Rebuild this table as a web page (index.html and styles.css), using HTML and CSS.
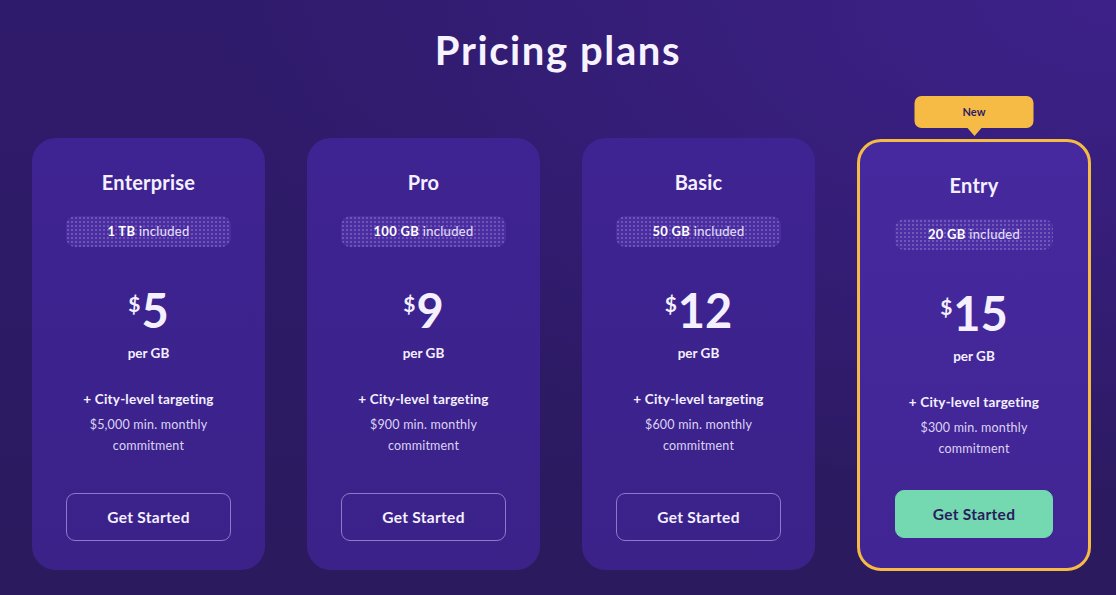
FILE: index.html
```html
<!DOCTYPE html>
<html lang="en">
<head>
<meta charset="utf-8">
<title>Pricing plans</title>
<link rel="stylesheet" href="styles.css">
</head>
<body>
<main class="page">
  <h1 class="title">Pricing plans</h1>
  <div class="plans">
    <section class="card">
      <h2 class="plan-name">Enterprise</h2>
      <div class="badge"><b>1 TB</b> included</div>
      <div class="price"><span class="cur">$</span><span class="amount">5</span></div>
      <div class="unit">per GB</div>
      <div class="feature">+ City-level targeting</div>
      <p class="desc">$5,000 min. monthly<br>commitment</p>
      <button class="btn">Get Started</button>
    </section>
    <section class="card">
      <h2 class="plan-name">Pro</h2>
      <div class="badge"><b>100 GB</b> included</div>
      <div class="price"><span class="cur">$</span><span class="amount">9</span></div>
      <div class="unit">per GB</div>
      <div class="feature">+ City-level targeting</div>
      <p class="desc">$900 min. monthly<br>commitment</p>
      <button class="btn">Get Started</button>
    </section>
    <section class="card">
      <h2 class="plan-name">Basic</h2>
      <div class="badge"><b>50 GB</b> included</div>
      <div class="price"><span class="cur">$</span><span class="amount">12</span></div>
      <div class="unit">per GB</div>
      <div class="feature">+ City-level targeting</div>
      <p class="desc">$600 min. monthly<br>commitment</p>
      <button class="btn">Get Started</button>
    </section>
    <section class="card card-featured">
      <div class="tag">New</div>
      <h2 class="plan-name">Entry</h2>
      <div class="badge"><b>20 GB</b> included</div>
      <div class="price"><span class="cur">$</span><span class="amount">15</span></div>
      <div class="unit">per GB</div>
      <div class="feature">+ City-level targeting</div>
      <p class="desc">$300 min. monthly<br>commitment</p>
      <button class="btn btn-primary">Get Started</button>
    </section>
  </div>
</main>
</body>
</html>
```

FILE: styles.css
```css
* { box-sizing: border-box; }
html, body { margin: 0; height: 100%; }
body {
  font-family: "Lato", "Liberation Sans", sans-serif;
  color: #f4f0ff;
  background:
    radial-gradient(ellipse 900px 500px at 100% 0%, #3d2189 0%, rgba(61,33,137,0) 100%),
    linear-gradient(180deg, #2f1b6b 0%, #2d1a65 60%, #2b1a5d 100%);
  overflow: hidden;
}
.page {
  width: 1116px;
  height: 595px;
  display: flex;
  flex-direction: column;
  align-items: center;
}
.title {
  margin: 26px 0 0;
  font-size: 40px;
  line-height: 48px;
  font-weight: 700;
  letter-spacing: 1.6px;
  color: #f6f2ff;
}
.plans {
  margin-top: 64px;
  align-self: flex-start;
  padding-left: 32px;
  display: flex;
  gap: 42px;
  align-items: flex-start;
}
.card {
  position: relative;
  width: 233px;
  height: 432px;
  border-radius: 24px;
  background: linear-gradient(180deg, #3e2392 0%, #3b2289 100%);
  padding: 32px 34px 29px;
  display: flex;
  flex-direction: column;
  align-items: center;
  text-align: center;
}
.card-featured {
  width: 234px;
  height: 432px;
  margin-top: 1px;
  border: 3px solid #f6bb44;
  background: linear-gradient(180deg, #46299e 0%, #412594 100%);
  padding: 31px 35px 30px;
}
.plan-name {
  margin: 0;
  font-size: 20px;
  line-height: 24px;
  font-weight: 700;
  letter-spacing: 0.2px;
}
.badge {
  margin-top: 22px;
  width: 100%;
  height: 31px;
  border-radius: 9px;
  background-color: #4a2da0;
  background-image: radial-gradient(circle, rgba(255,255,255,0.2) 0.7px, rgba(255,255,255,0) 1.1px);
  background-size: 4px 4px;
  font-size: 13px;
  line-height: 31px;
  font-weight: 400;
  letter-spacing: 0.3px;
  color: #e9e3ff;
}
.badge b { font-weight: 700; color: #fff; }
.card-featured .badge { background-color: #4c2fa4; }
.price {
  margin-top: 40px;
  display: flex;
  align-items: flex-start;
  justify-content: center;
  height: 46px;
}
.cur {
  font-size: 21px;
  line-height: 20px;
  font-weight: 700;
  margin-top: 7px;
  margin-right: 1px;
}
.amount {
  font-size: 47px;
  line-height: 46px;
  font-weight: 700;
}
.unit {
  margin-top: 12px;
  font-size: 13.5px;
  line-height: 16px;
  font-weight: 700;
}
.feature {
  margin-top: 30px;
  font-size: 13.5px;
  line-height: 16px;
  font-weight: 700;
  letter-spacing: 0.2px;
}
.desc {
  margin: 7px 0 0;
  font-size: 12.5px;
  line-height: 21px;
  letter-spacing: 0.2px;
  color: #ddd4f4;
}
.btn {
  margin-top: auto;
  width: 100%;
  height: 48px;
  border-radius: 9px;
  border: 1px solid #8c79c9;
  background: transparent;
  color: #f4f0ff;
  font-family: inherit;
  font-size: 15.5px;
  font-weight: 700;
  letter-spacing: 0.3px;
  cursor: pointer;
}
.btn-primary {
  background: #74d9b0;
  border-color: #74d9b0;
  color: #2b1a5e;
}
.tag {
  position: absolute;
  top: -46px;
  left: 50%;
  transform: translateX(-50%);
  width: 119px;
  height: 32px;
  border-radius: 7px;
  background: #f6bb44;
  color: #2d1b66;
  font-size: 11px;
  font-weight: 700;
  line-height: 32px;
}
.tag::after {
  content: "";
  position: absolute;
  left: 50%;
  bottom: -8px;
  transform: translateX(-50%);
  border-left: 7px solid transparent;
  border-right: 7px solid transparent;
  border-top: 8px solid #f6bb44;
}
```
